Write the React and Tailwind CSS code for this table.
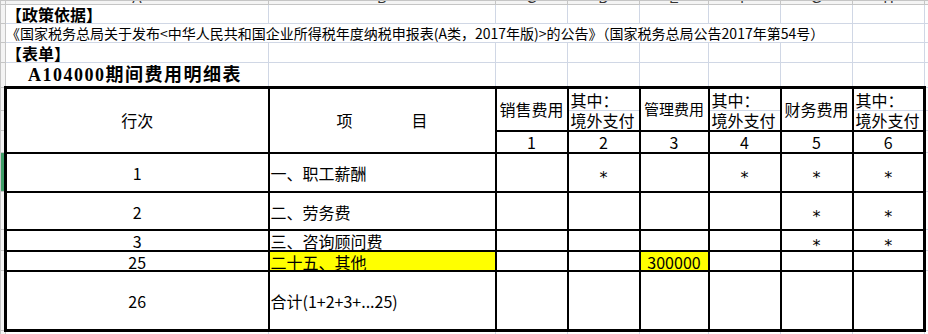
import React from "react";

// Excel-like sheet: gridlines are 1px cell borders, the form uses black borders
const grid = "border border-[#d0d7e5] p-0";
const rowHead = "border border-[#c5c5c5] bg-[#f4f4f4] p-0";
const cell = "border-2 border-black p-0";
const letters = ["A", "B", "C", "D", "E", "F", "G", "H", "I"];

function Star() {
  return (
    <span className="inline-block translate-y-[5px] font-['DejaVu_Sans',sans-serif] text-[16px] leading-[16px]">*</span>
  );
}

function Empty({ n }) {
  return Array.from({ length: n }).map((_, i) => <td key={i} className={grid}></td>);
}

export default function App() {
  const body = [
    { no: "1", name: "一、职工薪酬", h: "h-[39px]", stars: [false, true, false, true, true, true] },
    { no: "2", name: "二、劳务费", h: "h-[38px]", stars: [false, false, false, false, true, true] },
    { no: "3", name: "三、咨询顾问费", h: "h-[21px]", stars: [false, false, false, false, true, true] },
  ];

  return (
    <div className="w-[928px] h-[334px] overflow-hidden bg-white text-black font-['Noto_Sans_CJK_SC',sans-serif]">
      <table className="table-fixed border-collapse w-[974px]">
        <colgroup>
          <col className="w-[5px]" />
          <col className="w-[263px]" />
          <col className="w-[227px]" />
          <col className="w-[72px]" />
          <col className="w-[72px]" />
          <col className="w-[69px]" />
          <col className="w-[72px]" />
          <col className="w-[72px]" />
          <col className="w-[72px]" />
          <col className="w-[50px]" />
        </colgroup>
        <tbody>
          {/* column letters, mostly scrolled out of view */}
          <tr className="h-[4px]">
            <td className={rowHead}></td>
            {letters.map((l) => (
              <td key={l} className={rowHead}>
                <div className="h-[3px] overflow-hidden text-center font-['Liberation_Sans',sans-serif] text-[14px] leading-[14px] text-[#333]">
                  <div className="-mt-[10px]">{l}</div>
                </div>
              </td>
            ))}
          </tr>

          <tr className="h-[19px]">
            <td className={rowHead}></td>
            <td className={`${grid} whitespace-nowrap text-[16px] leading-[16px] font-bold`}>【政策依据】</td>
            <Empty n={8} />
          </tr>
          <tr className="h-[19px]">
            <td className={rowHead}></td>
            <td colSpan={7} className={`${grid} whitespace-nowrap text-[14px] leading-[14px]`}>
              《国家税务总局关于发布&lt;中华人民共和国企业所得税年度纳税申报表(A类，2017年版)&gt;的公告》（国家税务总局公告2017年第54号）
            </td>
            <Empty n={2} />
          </tr>
          <tr className="h-[20px]">
            <td className={rowHead}></td>
            <td className={`${grid} whitespace-nowrap text-[16px] leading-[16px] font-bold`}>【表单】</td>
            <Empty n={8} />
          </tr>
          <tr className="h-[25px]">
            <td className={rowHead}></td>
            <td className={`${grid} whitespace-nowrap pl-[22px] pt-[1px] text-[18px] leading-[18px] font-bold tracking-[1.5px] font-['Liberation_Serif','Noto_Sans_CJK_SC',serif]`}>
              A104000期间费用明细表
            </td>
            <Empty n={8} />
          </tr>

          {/* form header */}
          <tr className="h-[23px] text-[16px] leading-[16px]">
            <td className={rowHead}></td>
            <td rowSpan={3} className={`${cell} border-t-[3px] border-l-[3px] text-center`}>行次</td>
            <td rowSpan={3} className={`${cell} border-t-[3px] text-center`}>
              <span>项</span>
              <span className="ml-[59px]">目</span>
            </td>
            <td rowSpan={2} className={`${cell} border-t-[3px] text-center whitespace-nowrap`}>销售费用</td>
            <td className={`${cell} border-t-[3px] border-b border-b-[#d0d7e5] pl-[2px] whitespace-nowrap`}>其中：</td>
            <td rowSpan={2} className={`${cell} border-t-[3px] text-center whitespace-nowrap text-[15px]`}>管理费用</td>
            <td className={`${cell} border-t-[3px] border-b border-b-[#d0d7e5] pl-[2px] whitespace-nowrap`}>其中：</td>
            <td rowSpan={2} className={`${cell} border-t-[3px] text-center whitespace-nowrap`}>财务费用</td>
            <td className={`${cell} border-t-[3px] border-r-[3px] border-b border-b-[#d0d7e5] pl-[2px] whitespace-nowrap`}>其中：</td>
            <td className={grid}></td>
          </tr>
          <tr className="h-[20px] text-[16px] leading-[16px]">
            <td className={rowHead}></td>
            <td className={`${cell} border-t border-t-[#d0d7e5] pl-[2px] whitespace-nowrap`}>境外支付</td>
            <td className={`${cell} border-t border-t-[#d0d7e5] pl-[2px] whitespace-nowrap`}>境外支付</td>
            <td className={`${cell} border-t border-t-[#d0d7e5] border-r-[3px] pl-[2px] whitespace-nowrap`}>境外支付</td>
            <td className={grid}></td>
          </tr>
          <tr className="h-[22px] text-[16px] leading-[16px]">
            <td className={rowHead}></td>
            {["1", "2", "3", "4", "5", "6"].map((n, i) => (
              <td key={n} className={`${cell} text-center ${i === 5 ? "border-r-[3px]" : ""}`}>{n}</td>
            ))}
            <td className={grid}></td>
          </tr>

          {/* form body */}
          {body.map((r, idx) => (
            <tr key={r.no} className={`${r.h} text-[16px] leading-[16px]`}>
              <td className={idx === 0 ? "border border-[#c5c5c5] bg-[#3f9e68] p-0" : rowHead}></td>
              <td className={`${cell} border-l-[3px] text-center pt-[2px]`}>{r.no}</td>
              <td className={`${cell} pl-[1px] pt-[2px] whitespace-nowrap`}>{r.name}</td>
              {r.stars.map((s, i) => (
                <td key={i} className={`${cell} text-center ${i === 5 ? "border-r-[3px]" : ""}`}>
                  {s ? <Star /> : null}
                </td>
              ))}
              <td className={grid}></td>
            </tr>
          ))}
          <tr className="h-[20px] text-[16px] leading-[16px]">
            <td className={rowHead}></td>
            <td className={`${cell} border-l-[3px] text-center pt-[2px]`}>25</td>
            <td className={`${cell} bg-[#ffff00] pl-[1px] pt-[2px] whitespace-nowrap`}>二十五、其他</td>
            <td className={cell}></td>
            <td className={cell}></td>
            <td className={`${cell} bg-[#ffff00] text-center pt-[2px]`}>300000</td>
            <td className={cell}></td>
            <td className={cell}></td>
            <td className={`${cell} border-r-[3px]`}></td>
            <td className={grid}></td>
          </tr>
          <tr className="h-[60px] text-[16px] leading-[16px]">
            <td className={rowHead}></td>
            <td className={`${cell} border-l-[3px] border-b-[3px] text-center pt-[2px]`}>26</td>
            <td className={`${cell} border-b-[3px] pl-[1px] pt-[2px] whitespace-nowrap`}>合计(1+2+3+...25)</td>
            <td className={`${cell} border-b-[3px]`}></td>
            <td className={`${cell} border-b-[3px]`}></td>
            <td className={`${cell} border-b-[3px]`}></td>
            <td className={`${cell} border-b-[3px]`}></td>
            <td className={`${cell} border-b-[3px]`}></td>
            <td className={`${cell} border-b-[3px] border-r-[3px]`}></td>
            <td className={grid}></td>
          </tr>
          <tr className="h-[20px]">
            <td className={rowHead}></td>
            <Empty n={9} />
          </tr>
        </tbody>
      </table>
    </div>
  );
}
